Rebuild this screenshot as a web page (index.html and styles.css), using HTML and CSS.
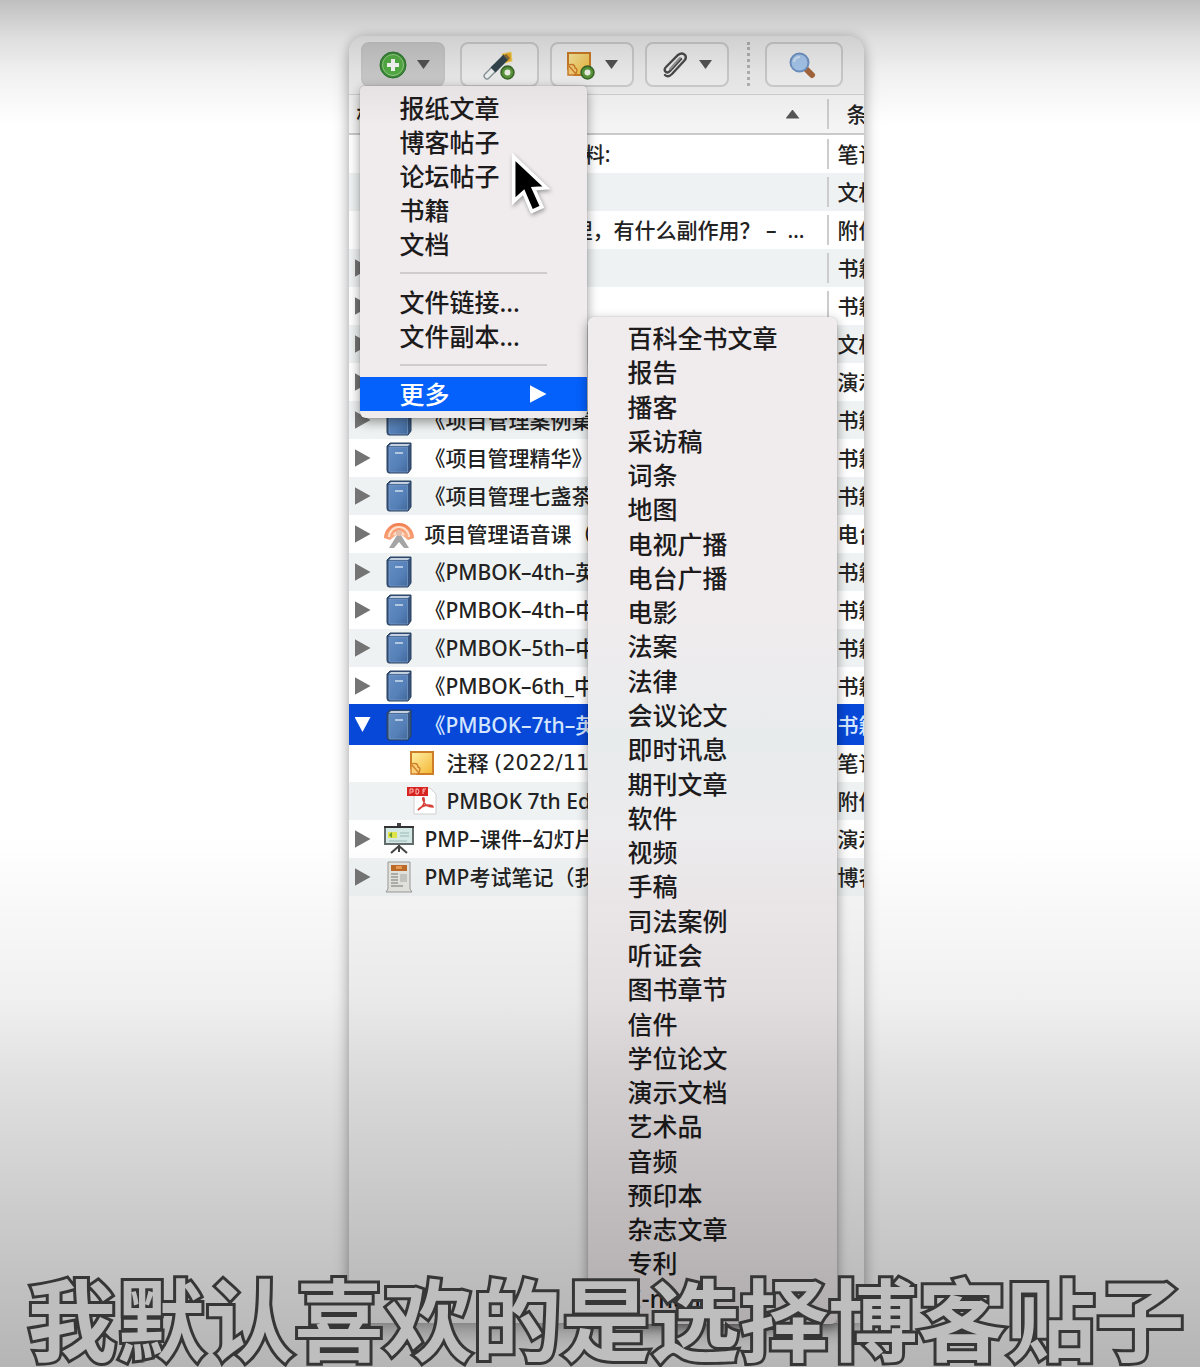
FILE: index.html
```html
<!DOCTYPE html>
<html lang="zh-CN">
<head>
<meta charset="utf-8">
<meta name="viewport" content="width=device-width, initial-scale=1">
<title>条目列表</title>
<link rel="stylesheet" href="styles.css">
</head>
<body>
<svg class="defs" aria-hidden="true">
  <defs>
    <linearGradient id="cover" x1="0" y1="0" x2="1" y2="1"><stop offset="0" stop-color="#648ec3"/><stop offset=".6" stop-color="#5580b8"/><stop offset="1" stop-color="#43699c"/></linearGradient>
    <linearGradient id="paper" x1="0" y1="0" x2="1" y2="1"><stop offset="0" stop-color="#fff0a8"/><stop offset="1" stop-color="#f3b632"/></linearGradient>
    <radialGradient id="signal" cx=".5" cy=".8" r=".8"><stop offset="0" stop-color="#ffc39e"/><stop offset="1" stop-color="#f0784a"/></radialGradient>
  </defs>
  <symbol id="book" viewBox="0 0 26 32">
    <path d="M1 4 4 1H25V27L22 31H3Q1 31 1 28Z" fill="#37557e" stroke="#29405f"/>
    <path d="M3 4 5 2H24L22 4Z" fill="#c3d0df"/>
    <path d="M3 5H21.500V30H4Q3 30 3 28Z" fill="url(#cover)" stroke="#7d9fc9" stroke-width=".7"/>
    <path d="M9 11H17" stroke="#c6d8ec" stroke-width="1.600"/>
  </symbol>
  <symbol id="note" viewBox="0 0 26 26">
    <path d="M2 2H24V24H8L2 18Z" fill="url(#paper)" stroke="#cf7e28" stroke-width="2"/>
    <path d="M2 14Q9 12 9 17Q13 18 9 24H2Z" fill="#fbd078" stroke="#cf7e28" stroke-width="1.400"/>
    <path d="M3 15 10 23" stroke="#cf7e28" stroke-width="1.400"/>
  </symbol>
  <symbol id="plus-badge" viewBox="0 0 14 14">
    <circle cx="7" cy="7" r="6" fill="#5d9a3c" stroke="#3b6b2b" stroke-width="1.500"/>
    <circle cx="7" cy="7" r="2.800" fill="#f1f8ea"/>
  </symbol>
</svg>

<main class="stage">
  <section class="window">
    <div class="toolbar">
      <button class="tool active add" aria-label="新建条目">
        <svg width="28" height="28" viewBox="0 0 28 28"><circle cx="14" cy="14" r="13" fill="#3d8f38" stroke="#2f7a31"/><circle cx="14" cy="14" r="10.500" fill="#55b145" stroke="#9bd38c"/><path d="M14 8V20M8 14H20" stroke="#fff" stroke-width="4"/></svg>
        <i class="down"></i>
      </button>
      <button class="tool wand" aria-label="通过标识符添加">
        <svg width="32" height="30" viewBox="0 0 32 30"><path d="M19 4 28 2 29 11 22 13Z" fill="#f2b22a" stroke="#f8da69"/><path d="M4 26 12 18" stroke="#8a969b" stroke-width="7" stroke-linecap="round"/><path d="M4 26 12 18" stroke="#f7f9f9" stroke-width="4.500" stroke-linecap="round"/><path d="M10 20 23 7" stroke="#34474f" stroke-width="7"/><path d="M22 5 26 9" stroke="#8c713a" stroke-width="3"/><use href="#plus-badge" x="17" y="15" width="15" height="15"/></svg>
      </button>
      <button class="tool notes" aria-label="新建笔记">
        <svg width="30" height="30" viewBox="0 0 30 30"><use href="#note" x="1" y="1" width="26" height="26"/><use href="#plus-badge" x="15" y="15" width="15" height="15"/></svg>
        <i class="down"></i>
      </button>
      <button class="tool attach" aria-label="添加附件">
        <svg width="28" height="28" viewBox="0 0 28 28" fill="none" stroke-linecap="round"><path d="M20 8 9 20Q6 23 4 20Q3 18 5 16L17 4Q21 1 24 4Q26 7 23 10L11 23Q7 27 4 24" stroke="#4c4c4c" stroke-width="2.400"/><path d="M19 7 9 18" stroke="#999" stroke-width="2"/></svg>
        <i class="down"></i>
      </button>
      <span class="divider"></span>
      <button class="tool search" aria-label="高级搜索">
        <svg width="28" height="28" viewBox="0 0 28 28"><path d="M17 17 24 24" stroke="#a8673c" stroke-width="6" stroke-linecap="round"/><circle cx="11.500" cy="11.500" r="9" fill="#a9cbf1" stroke="#7296c8" stroke-width="2"/><path d="M6 11Q7 6 12 6" fill="none" stroke="#d5e6fa" stroke-width="2"/></svg>
      </button>
    </div>

    <table class="items">
      <colgroup><col><col class="type"></colgroup>
      <thead><tr><th><span class="heading">标题<i class="up"></i></span></th><th>条目类型</th></tr></thead>
      <tbody>
        <tr><td><span class="cell plain">项目管理学习资料:</span></td><td>笔记</td></tr>
        <tr><td></td><td>文档</td></tr>
        <tr><td><span class="cell plain">吃药后犯困的原理，有什么副作用？ –&nbsp; …</span></td><td>附件</td></tr>
        <tr><td><span class="cell"><i class="twist"></i></span></td><td>书籍</td></tr>
        <tr><td><span class="cell"><i class="twist"></i></span></td><td>书籍</td></tr>
        <tr><td><span class="cell"><i class="twist"></i></span></td><td>文档</td></tr>
        <tr><td><span class="cell"><i class="twist"></i></span></td><td>演示文档</td></tr>
        <tr><td><span class="cell"><i class="twist"></i><svg class="icon"><use href="#book"/></svg>《项目管理案例集》</span></td><td>书籍</td></tr>
        <tr><td><span class="cell"><i class="twist"></i><svg class="icon"><use href="#book"/></svg>《项目管理精华》</span></td><td>书籍</td></tr>
        <tr><td><span class="cell"><i class="twist"></i><svg class="icon"><use href="#book"/></svg>《项目管理七盏茶》</span></td><td>书籍</td></tr>
        <tr><td><span class="cell"><i class="twist"></i><svg class="icon" viewBox="0 0 32 32"><path d="M1 20A15 15 0 1 1 31 20L25 22 16 15 7 22Z" fill="url(#signal)"/><path d="M6 19A10 10 0 0 1 26 19M11 17A6 6 0 0 1 21 17" fill="none" stroke="#ffe0cd" stroke-width="2"/><path d="M16 14 6 30H11L16 24 21 30H26Z" fill="#a5a5a5"/><circle cx="16" cy="15" r="3" fill="#e7bda8"/></svg>项目管理语音课（音频）</span></td><td>电台广播</td></tr>
        <tr><td><span class="cell"><i class="twist"></i><svg class="icon"><use href="#book"/></svg>《PMBOK–4th–英文》</span></td><td>书籍</td></tr>
        <tr><td><span class="cell"><i class="twist"></i><svg class="icon"><use href="#book"/></svg>《PMBOK–4th–中文》</span></td><td>书籍</td></tr>
        <tr><td><span class="cell"><i class="twist"></i><svg class="icon"><use href="#book"/></svg>《PMBOK–5th–中文》</span></td><td>书籍</td></tr>
        <tr><td><span class="cell"><i class="twist"></i><svg class="icon"><use href="#book"/></svg>《PMBOK–6th_中文》</span></td><td>书籍</td></tr>
        <tr class="selected"><td><span class="cell"><i class="twist open"></i><svg class="icon"><use href="#book"/></svg>《PMBOK–7th–英文》</span></td><td>书籍</td></tr>
        <tr><td><span class="cell child"><svg class="icon small"><use href="#note"/></svg>注释&nbsp;<time>(2022/11)</time></span></td><td>笔记</td></tr>
        <tr><td><span class="cell child"><svg class="icon" viewBox="0 0 32 32"><path d="M8 3H24L30 9V29H8Z" fill="#fff" stroke="#d0d0d0"/><path d="M1 2H22V11H1Z" fill="#d82320"/><path d="M4 9V4H7V7H5M10 4V9H12Q14 6 12 4ZM17 9V4H20M17 6H19" fill="none" stroke="#fbc4bf"/><path d="M12 25Q20 20 18 13Q16 12 17 15Q19 22 27 22Q27 20 22 20Q15 21 12 25Z" fill="none" stroke="#d6423a" stroke-width="1.500"/></svg>PMBOK 7th Edition</span></td><td>附件</td></tr>
        <tr><td><span class="cell"><i class="twist"></i><svg class="icon" viewBox="0 0 32 32"><path d="M15 1H17V3H15ZM16 22V29M16 23 8 30M16 23 24 30" stroke="#444" stroke-width="2" fill="#444"/><path d="M2 4H30V21H2Z" fill="#d4e8e6" stroke="#646b6b" stroke-width="2"/><path d="M1 3H31V5H1Z" fill="#333"/><path d="M5 9H14V15H5Z" fill="#dfe34c"/><path d="M6 12 9 9V15Z" fill="#669a35"/><path d="M17 10H26M17 13H26M6 18H24" stroke="#9bb7b5"/></svg>PMP–课件–幻灯片</span></td><td>演示文档</td></tr>
        <tr><td><span class="cell"><i class="twist"></i><svg class="icon" viewBox="0 0 32 32"><path d="M5 1H27V28L29 31H3L5 28Z" fill="#e4e4df" stroke="#999"/><path d="M8 4H24V10H8Z" fill="#bd6a26"/><path d="M13 5H19V8H13Z" fill="#e79a52"/><path d="M8 13H15M8 16H15M8 19H15M8 22H15M8 25H20" stroke="#9b9b98" stroke-width="1.400"/><path d="M17 13H24V21H17Z" fill="#c5c5c2"/></svg>PMP考试笔记（我的）</span></td><td>博客帖子</td></tr>
      </tbody>
    </table>

    <nav class="menu main-menu" aria-label="新建条目">
      <ul>
        <li><a href="#">报纸文章</a></li>
        <li><a href="#">博客帖子</a></li>
        <li><a href="#">论坛帖子</a></li>
        <li><a href="#">书籍</a></li>
        <li><a href="#">文档</a></li>
      </ul>
      <hr>
      <ul>
        <li><a href="#">文件链接...</a></li>
        <li><a href="#">文件副本...</a></li>
      </ul>
      <hr>
      <ul><li><a href="#" class="current">更多<i class="more"></i></a></li></ul>
    </nav>

    <nav class="menu sub-menu" aria-label="更多">
      <ul>
        <li><a href="#">百科全书文章</a></li><li><a href="#">报告</a></li><li><a href="#">播客</a></li><li><a href="#">采访稿</a></li>
        <li><a href="#">词条</a></li><li><a href="#">地图</a></li><li><a href="#">电视广播</a></li><li><a href="#">电台广播</a></li>
        <li><a href="#">电影</a></li><li><a href="#">法案</a></li><li><a href="#">法律</a></li><li><a href="#">会议论文</a></li>
        <li><a href="#">即时讯息</a></li><li><a href="#">期刊文章</a></li><li><a href="#">软件</a></li><li><a href="#">视频</a></li>
        <li><a href="#">手稿</a></li><li><a href="#">司法案例</a></li><li><a href="#">听证会</a></li><li><a href="#">图书章节</a></li>
        <li><a href="#">信件</a></li><li><a href="#">学位论文</a></li><li><a href="#">演示文档</a></li><li><a href="#">艺术品</a></li>
        <li><a href="#">音频</a></li><li><a href="#">预印本</a></li><li><a href="#">杂志文章</a></li><li><a href="#">专利</a></li>
        <li><a href="#">E-mail</a></li>
      </ul>
    </nav>

    <svg class="cursor" width="40" height="64" viewBox="0 0 44 70"><path d="M4 4V53L15 43L24 64L35 59L26 39L40 38Z" fill="#000" stroke="#fff" stroke-width="4"/></svg>
  </section>
  <p class="caption">我默认喜欢的是选择博客贴子</p>
</main>
</body>
</html>
```

FILE: styles.css
```css
* { box-sizing: border-box; }

body {
  margin: 0;
  background: #fff;
  color: #222;
  font: 500 21px/38px "Noto Sans", "Noto Sans CJK SC", sans-serif;
}

.defs { position: absolute; width: 0; height: 0; }

ul { margin: 0; padding: 0; list-style: none; }

.stage {
  position: relative;
  padding: 36px 0 44px;
  overflow: hidden;
}

/* Shade that darkens the top and the bottom of the scene */
.stage::after {
  content: "";
  position: absolute;
  inset: 0;
  pointer-events: none;
  background:
    linear-gradient(rgba(0, 0, 0, .25), rgba(0, 0, 0, .13) 38px, rgba(0, 0, 0, .06) 72px, transparent 125px),
    linear-gradient(transparent 61%, rgba(0, 0, 0, .06) 73%, rgba(0, 0, 0, .12) 79%, rgba(0, 0, 0, .19) 87%, rgba(0, 0, 0, .29));
}

.window {
  position: relative;
  width: 515px;
  min-height: 1287px;
  margin: 0 auto;
  left: 6px;
  border-radius: 16px 16px 4px 4px;
  background: #f8f8f8;
  box-shadow: 0 0 12px rgba(0, 0, 0, .22), 0 12px 18px rgba(0, 0, 0, .2);
}

/* Toolbar */
.toolbar {
  display: flex;
  align-items: flex-start;
  height: 59px;
  padding: 6px 12px 0;
  border-bottom: 1px solid #d2d2d2;
  border-radius: 16px 16px 0 0;
  background: #f0f0f0;
}

.tool {
  display: flex;
  align-items: center;
  justify-content: center;
  gap: 10px;
  width: 84px;
  height: 45px;
  padding: 0;
  border: 2px solid #d0d0d0;
  border-radius: 8px;
  background: #f4f4f4;
}
.tool.active { padding-left: 4px; border-color: #ccc; background: #cfcfcf; }
.wand { width: 79px; margin-left: 15px; }
.notes { margin-left: 11px; }
.attach { margin-left: 11px; }
.search { width: 78px; padding-right: 4px; }

.divider {
  height: 44px;
  margin: 0 15px 0 18px;
  border-left: 3px dotted #b5b5b5;
}

.down, .up, .twist, .more { flex: none; display: block; background: #555; }
.down { width: 13px; height: 9px; clip-path: polygon(0 0, 100% 0, 50% 100%); }
.up { width: 14px; height: 9px; clip-path: polygon(50% 0, 100% 100%, 0 100%); }
.twist { width: 16px; height: 18px; background: #747474; clip-path: polygon(0 0, 100% 50%, 0 100%); }
.twist.open { background: #fff; clip-path: polygon(0 8%, 100% 8%, 50% 92%); }
.more { width: 17px; height: 18px; background: #fff; clip-path: polygon(0 0, 100% 50%, 0 100%); }

/* Item list */
.items {
  width: 100%;
  table-layout: fixed;
  border-collapse: separate;
  border-spacing: 0;
}
.type { width: 35px; }

.items th, .items td {
  height: 38px;
  padding: 0;
  overflow: hidden;
  white-space: nowrap;
  text-align: left;
  font-weight: 500;
}
.items th { height: 40px; border-bottom: 2px solid #c9c9c9; background: #f4f4f4; }
.items th + th { padding-left: 18px; }
.items td + td { padding-left: 9px; }
.items th:first-child, .items td:first-child {
  background-image: linear-gradient(#ccc, #ccc);
  background-repeat: no-repeat;
  background-position: right center;
  background-size: 2px 30px;
}
.items tr:nth-child(odd) td { background-color: #fff; }
.items tr:nth-child(even) td { background-color: #eff2f2; }
.items tbody tr.selected td {
  position: relative;
  height: 39px;
  background: #0748d8;
  color: #d5e6ff;
  box-shadow: 0 -1px #0748d8, 0 1px #0748d8;
}

.heading { display: flex; align-items: center; justify-content: space-between; padding: 0 29px 0 8px; }
.cell { display: flex; align-items: center; height: 38px; padding-left: 6px; }
.cell.child { padding-left: 57px; }
.cell.plain { justify-content: flex-end; width: 456px; }
tr:first-child .cell.plain { width: 262px; }
time { font-family: "DejaVu Sans", sans-serif; }
.icon { width: 32px; height: 32px; margin: 0 10px 0 12px; flex: none; }
.child .icon { margin: 0 9px 0 0; }
.child .small { height: 26px; }

/* Menus */
.menu {
  position: absolute;
  color: #1d1b1c;
  background: #f0ecee;
  box-shadow: 0 4px 12px rgba(0, 0, 0, .4), 0 0 1px rgba(0, 0, 0, .4);
  font-size: 25px;
  line-height: 34px;
}
.menu a { display: flex; align-items: center; justify-content: space-between; height: 34px; padding: 0 40px; color: inherit; text-decoration: none; }
.menu hr { height: 2px; margin: 11px 40px; border: 0; background: #cfcccd; }

.main-menu { top: 50px; left: 11px; width: 227px; padding: 5px 0 7px; border-radius: 4px 4px 6px 6px; }
.menu .current { color: #fff; background: #0461fc; }

.sub-menu {
  top: 281px;
  left: 239px;
  width: 249px;
  padding: 4px 0 9px;
  border-radius: 6px;
  background: linear-gradient(#f0ecee 30%, #e8ebec 42%, #f0ebed 60%);
}
.sub-menu ul { display: grid; grid-auto-rows: 1fr; min-height: 994px; }

.cursor { position: absolute; top: 117px; left: 161px; filter: drop-shadow(1px 2px 2px rgba(0, 0, 0, .35)); }

/* Subtitle over the scene */
.caption {
  position: absolute;
  z-index: 2;
  right: 0;
  bottom: 4px;
  left: 12px;
  margin: 0;
  color: #bebebe;
  font: 700 89px/94px "Noto Sans CJK SC", sans-serif;
  text-align: center;
  white-space: nowrap;
  -webkit-text-stroke: 6px #363636;
  paint-order: stroke fill;
}
```
